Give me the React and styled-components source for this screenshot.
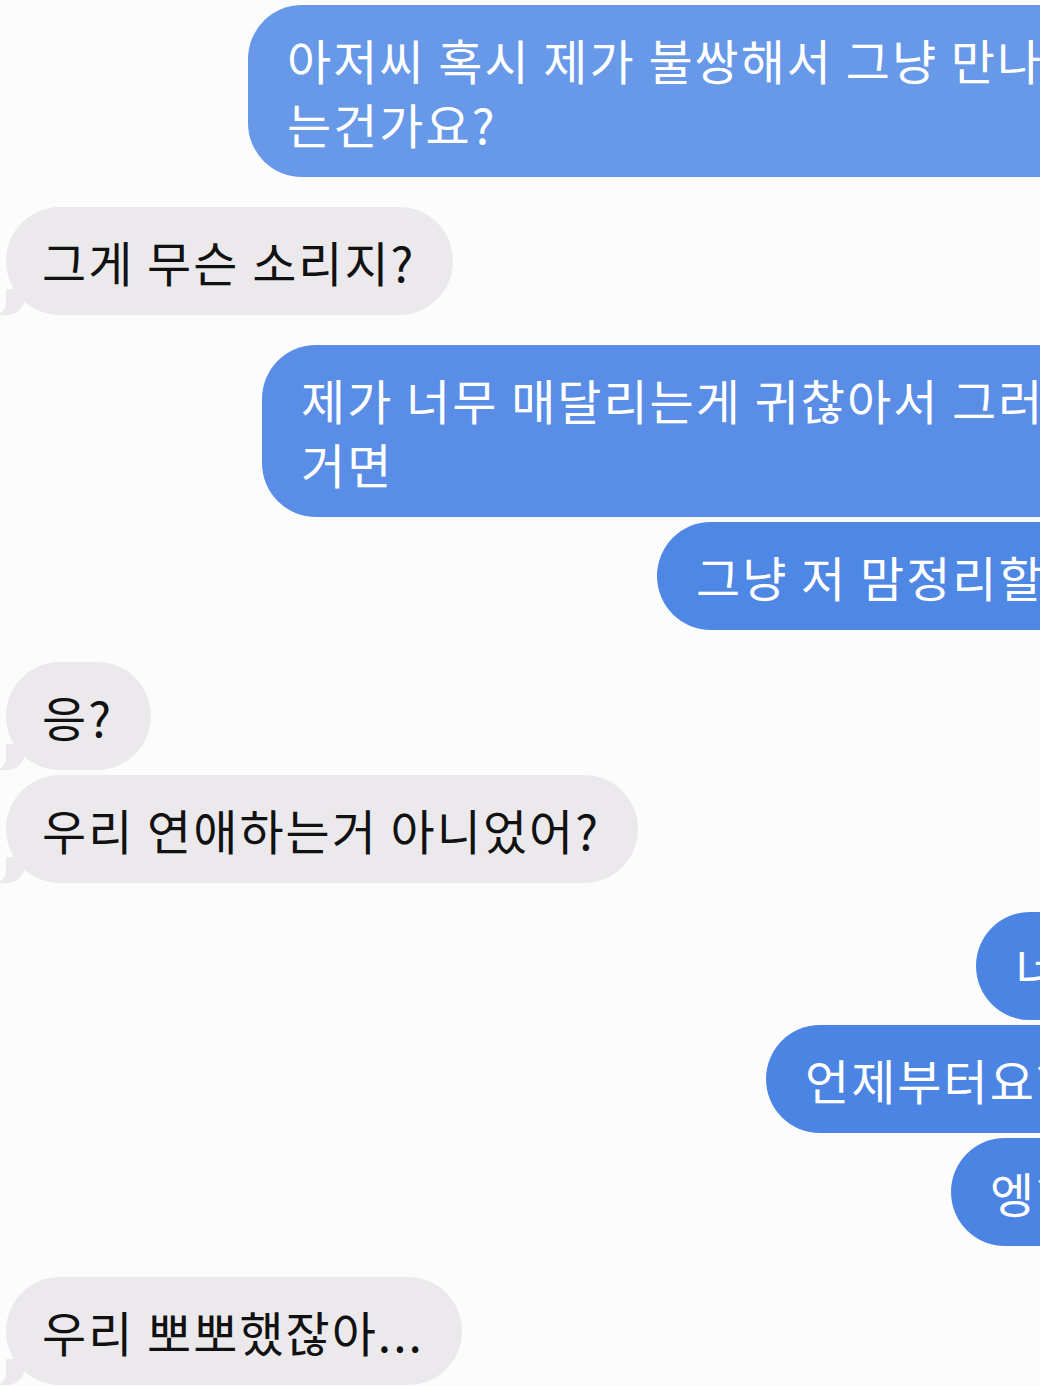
import React from 'react';
import styled, { createGlobalStyle } from 'styled-components';

const GlobalStyle = createGlobalStyle`
  html, body {
    margin: 0;
    padding: 0;
    background: #fdfcfd;
    overflow: hidden;
  }
`;

const messages = [
  { from: 'me', gap: 5, offset: 248, lines: ['아저씨 혹시 제가 불쌍해서 그냥 만나', '는건가요?'], colour: '#6898e8' },
  { from: 'them', gap: 30, lines: ['그게 무슨 소리지?'] },
  { from: 'me', gap: 30, offset: 262, lines: ['제가 너무 매달리는게 귀찮아서 그러', '거면'], colour: '#5a8ee6' },
  { from: 'me', gap: 5, offset: 657, lines: ['그냥 저 맘정리할게요'], colour: '#4f87e4' },
  { from: 'them', gap: 32, lines: ['응?'] },
  { from: 'them', gap: 5, lines: ['우리 연애하는거 아니었어?'] },
  { from: 'me', gap: 29, offset: 976, lines: ['너무 갑자기'], colour: '#4c84e4' },
  { from: 'me', gap: 5, offset: 766, lines: ['언제부터요?'], colour: '#4c84e4' },
  { from: 'me', gap: 5, offset: 951, lines: ['엥?'], colour: '#4c84e4' },
  { from: 'them', gap: 31, lines: ['우리 뽀뽀했잖아...'] },
];

const App = () => {
  return (
    <Thread>
      <GlobalStyle />
      {messages.map((msg, key) => (
        <Row key={key} $gap={msg.gap} $offset={msg.from === 'me' ? msg.offset : 6}>
          {msg.from === 'me' ? (
            <SentBubble $colour={msg.colour}>
              {msg.lines.map((line, i) => <Line key={i}>{line}</Line>)}
            </SentBubble>
          ) : (
            <ReceivedBubble>
              {msg.lines.map((line, i) => <Line key={i}>{line}</Line>)}
            </ReceivedBubble>
          )}
        </Row>
      ))}
    </Thread>
  );
};

const Thread = styled.div`
  width: 1040px;
  height: 1386px;
  overflow: hidden;
  display: flex;
  flex-direction: column;
  background: #fdfcfd;
  font-family: "Noto Sans CJK KR", "Noto Sans", sans-serif;
`;

const Row = styled.div`
  display: flex;
  justify-content: flex-start;
  margin-top: ${props => props.$gap}px;
  padding-left: ${props => props.$offset}px;
  flex-shrink: 0;
`;

const Bubble = styled.div`
  position: relative;
  flex-shrink: 0;
  padding: 22px 40px 22px 39px;
  border-radius: 54px;
  font-size: 48px;
  line-height: 64px;
  white-space: nowrap;
  letter-spacing: 2px;
`;

const SentBubble = styled(Bubble)`
  background: ${props => props.$colour};
  color: #ffffff;
  padding-right: 120px;
`;

const ReceivedBubble = styled(Bubble)`
  background: #ebe9ec;
  color: #111111;
  padding-left: 36px;
  padding-right: 38px;

  &::before {
    content: "";
    position: absolute;
    bottom: 0;
    left: -7px;
    width: 26px;
    height: 26px;
    background: #ebe9ec;
    border-bottom-right-radius: 18px;
  }

  &::after {
    content: "";
    position: absolute;
    bottom: 0;
    left: -12px;
    width: 12px;
    height: 26px;
    background: #fdfcfd;
    border-bottom-right-radius: 12px;
  }
`;

const Line = styled.div`
  position: relative;
  z-index: 1;
`;

export default App;
